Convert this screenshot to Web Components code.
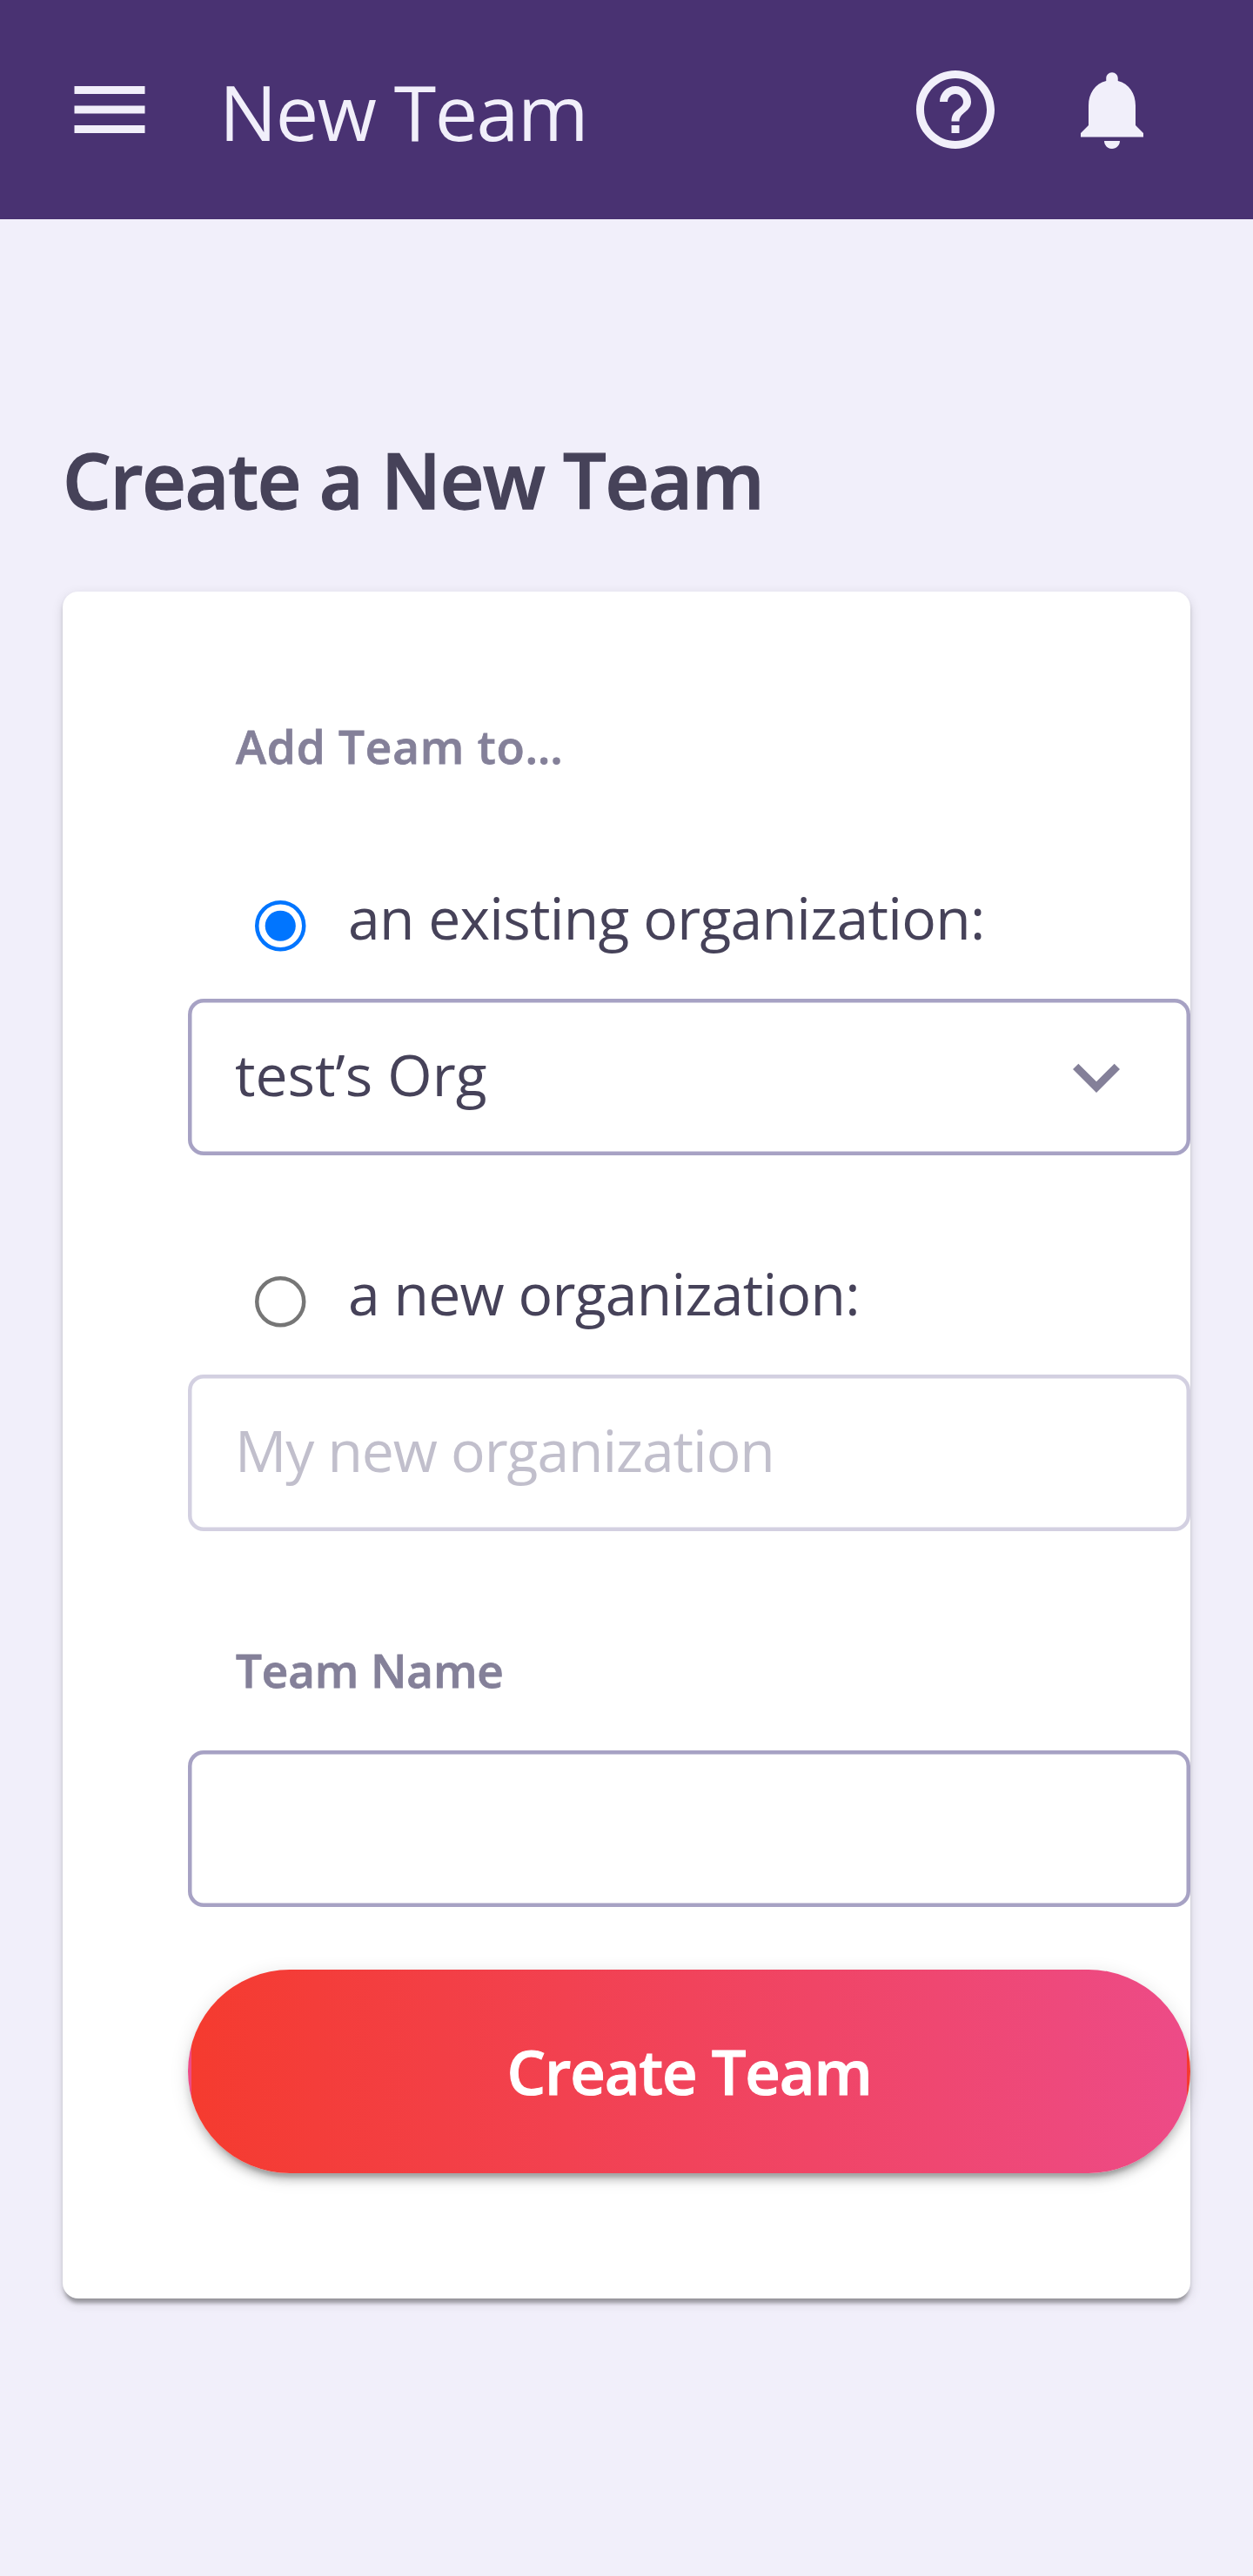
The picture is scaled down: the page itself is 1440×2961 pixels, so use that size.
<!DOCTYPE html>
<html lang="en">
<head>
<meta charset="utf-8">
<title>New Team</title>
<style>
  body { margin: 0; background: #f1effa; color: #464259; font-family: "Open Sans", "Noto Sans", sans-serif; }
</style>
</head>
<body>
<new-team-page></new-team-page>
<script>
const define = (name, html) => {
  const template = document.createElement('template');
  template.innerHTML = html;
  customElements.define(name, class extends HTMLElement {
    constructor() {
      super();
      this.attachShadow({ mode: 'open' }).append(template.content.cloneNode(true));
    }
  });
};

define('menu-icon', `
  <style>:host{display:block;width:108px;height:108px}svg{display:block}</style>
  <svg width="108" height="108" viewBox="0 0 24 24" fill="currentColor"><path d="M3 18h18v-2H3v2zm0-5h18v-2H3v2zm0-7v2h18V6H3z"/></svg>`);

define('help-icon', `
  <style>:host{display:block;width:108px;height:108px}svg{display:block}</style>
  <svg width="108" height="108" viewBox="0 0 24 24" fill="currentColor"><path d="M11 18h2v-2h-2v2zm1-16C6.48 2 2 6.48 2 12s4.48 10 10 10 10-4.48 10-10S17.52 2 12 2zm0 18c-4.41 0-8-3.59-8-8s3.59-8 8-8 8 3.59 8 8-3.59 8-8 8zm0-14c-2.21 0-4 1.79-4 4h2c0-1.1.9-2 2-2s2 .9 2 2c0 2-3 1.75-3 5h2c0-2.25 3-2.5 3-5 0-2.21-1.79-4-4-4z"/></svg>`);

define('bell-icon', `
  <style>:host{display:block;width:108px;height:108px}svg{display:block}</style>
  <svg width="108" height="108" viewBox="0 0 24 24" fill="currentColor"><path d="M12 22c1.1 0 2-.9 2-2h-4c0 1.1.89 2 2 2zm6-6v-5c0-3.07-1.64-5.64-4.5-6.32V4c0-.83-.67-1.5-1.5-1.5s-1.5.67-1.5 1.5v.68C7.63 5.36 6 7.92 6 11v5l-2 2v1h16v-1l-2-2z"/></svg>`);

define('chevron-icon', `
  <style>:host{display:block;width:108px;height:108px;color:#848099}svg{display:block}</style>
  <svg width="108" height="108" viewBox="0 0 24 24" fill="currentColor"><path d="M16.59 8.59L12 13.17 7.41 8.59 6 10l6 6 6-6z"/></svg>`);

define('top-bar', `
  <style>
    :host{display:flex;align-items:center;height:252px;box-sizing:border-box;padding:0 108px 0 72px;background:#493272;color:#f1effa}
    .title{flex:1;margin-left:72px;padding-top:4px;font-size:88px;line-height:120px;letter-spacing:-1.5px;white-space:nowrap}
    .actions{display:flex;gap:72px}
  </style>
  <menu-icon></menu-icon>
  <div class="title"><slot></slot></div>
  <div class="actions"><help-icon></help-icon><bell-icon></bell-icon></div>`);

define('page-heading', `
  <style>
    :host{display:block}
    h1{margin:0;font-size:88px;line-height:108px;font-weight:600;letter-spacing:-1.3px;-webkit-text-stroke:1.3px currentColor;white-space:nowrap}
  </style>
  <h1><slot></slot></h1>`);

define('form-card', `
  <style>
    :host{display:flex;flex-direction:column;box-sizing:border-box;height:1962px;padding:142px 0 144px 144px;background:#fff;border-radius:18px;
      box-shadow:0 9px 4.5px -4.5px rgba(0,0,0,.2),0 4.5px 4.5px 0 rgba(0,0,0,.14),0 4.5px 13.5px 0 rgba(0,0,0,.12)}
  </style>
  <slot></slot>`);

define('field-label', `
  <style>
    :host{display:block;padding-left:55px;color:#848099;font-size:53px;line-height:72px;font-weight:600;-webkit-text-stroke:.8px currentColor;white-space:nowrap}
  </style>
  <slot></slot>`);

define('radio-option', `
  <style>
    :host{display:flex;align-items:center;height:90px;padding-left:77px;gap:48.5px;font-size:66px;line-height:90px;letter-spacing:-.71px;white-space:nowrap}
    .dot{display:flex;align-items:center;justify-content:center;flex:none;margin-top:20px}
    .text{padding-bottom:2px}
    svg{display:block}
    .ring{fill:#fff;stroke:#767676}
    .fill{fill:none}
    :host([checked]) .ring{stroke:#0075ff}
    :host([checked]) .fill{fill:#0075ff}
  </style>
  <span class="dot"><svg width="58.5" height="58.5" viewBox="0 0 13 13"><circle class="ring" cx="6.5" cy="6.5" r="6"/><circle class="fill" cx="6.5" cy="6.5" r="3.9"/></svg></span>
  <span class="text"><slot></slot></span>`);

define('text-field', `
  <style>
    :host{display:flex;align-items:center;justify-content:space-between;height:180px;box-sizing:border-box;padding:0 54px;box-shadow:inset 0 0 0 4.5px #a7a2c4;border-radius:18px;
      font-size:66px;line-height:90px;white-space:nowrap}
    :host([disabled]){box-shadow:inset 0 0 0 4.5px #d3d0e1;color:#c1bfcc;letter-spacing:-1.05px}
    .text{padding-bottom:7px}
  </style>
  <span class="text"><slot></slot></span><slot name="icon"></slot>`);

define('submit-button', `
  <style>
    :host{display:block;border-radius:117px;box-shadow:0 13.5px 4.5px -9px rgba(0,0,0,.2),0 9px 9px 0 rgba(0,0,0,.14),0 4.5px 22.5px 0 rgba(0,0,0,.12)}
    button{display:block;width:100%;height:234px;box-sizing:border-box;margin:0;padding:1px 0 0;border:4px solid transparent;border-radius:117px;
      background:linear-gradient(90deg,#f53b2f,#ed4b87);color:#fff;font:600 70.5px/96px "Open Sans","Noto Sans",sans-serif;letter-spacing:-1.18px;-webkit-text-stroke:1px currentColor;white-space:nowrap}
  </style>
  <button type="button"><slot></slot></button>`);

define('new-team-page', `
  <style>
    :host{display:block;min-height:2961px}
    main{display:flex;flex-direction:column;padding:245px 72px 0}
    form-card{margin-top:74.5px}
    .first{margin-top:116px}
    .second{margin-top:114px}
    .name{margin-top:124px}
    text-field{margin-top:48px}
    .name + text-field{margin-top:56px}
    submit-button{margin-top:72px}
  </style>
  <top-bar>New Team</top-bar>
  <main>
    <page-heading>Create a New Team</page-heading>
    <form-card>
      <field-label style="letter-spacing:.81px">Add Team to…</field-label>
      <radio-option class="first" checked>an existing organization:</radio-option>
      <text-field>test’s Org<chevron-icon slot="icon"></chevron-icon></text-field>
      <radio-option class="second">a new organization:</radio-option>
      <text-field disabled>My new organization</text-field>
      <field-label class="name" style="letter-spacing:-.13px">Team Name</field-label>
      <text-field></text-field>
      <submit-button>Create Team</submit-button>
    </form-card>
  </main>`);
</script>
</body>
</html>
